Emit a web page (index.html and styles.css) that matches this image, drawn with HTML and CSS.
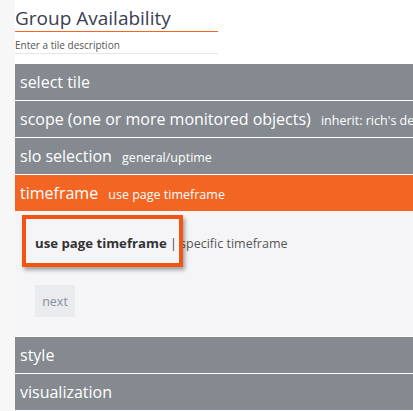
FILE: index.html
```html
<!DOCTYPE html>
<html lang="en">
<head>
    <meta charset="UTF-8">
    <title>Group Availability</title>
    <link rel="stylesheet" href="styles.css">
</head>
<body>
    <div class="editor">
        <div class="tile-head">
            <h2 class="tile-title">Group Availability</h2>
            <div class="tile-desc">Enter a tile description</div>
        </div>

        <div class="step">select tile</div>
        <div class="step">scope (one or more monitored objects) <span class="step-value">inherit: rich's demo group</span></div>
        <div class="step">slo selection <span class="step-value">general/uptime</span></div>
        <div class="step active">timeframe <span class="step-value">use page timeframe</span></div>

        <div class="step-body">
            <div class="choice">
                <span class="option selected">use page timeframe</span>
                <span class="sep">|</span>
                <span class="option">specific timeframe</span>
                <div class="highlight"></div>
            </div>
            <button class="next">next</button>
        </div>

        <div class="step">style</div>
        <div class="step">visualization</div>
    </div>
</body>
</html>
```

FILE: styles.css
```css
body {
    margin: 0;
    background: #f7f7f7;
    font-family: "Open Sans", "Noto Sans", sans-serif;
    overflow: hidden;
}
.editor {
    margin-left: 15px;
    width: 398px;
    background: #fff;
    overflow: hidden;
}
.tile-head {
    padding-top: 6px;
    height: 64px;
    box-sizing: border-box;
}
.tile-title {
    margin: 0;
    width: 203px;
    font-size: 19px;
    font-weight: normal;
    color: #3b4052;
    line-height: 25px;
    border-bottom: 1px solid #f26522;
}
.tile-desc {
    width: 203px;
    margin-top: 5px;
    font-size: 10px;
    color: #555;
    line-height: 16px;
    border-bottom: 1px solid #e6e6e6;
}
.step {
    height: 36px;
    line-height: 36px;
    padding-left: 5px;
    background: #848a90;
    color: #fff;
    font-size: 16px;
    white-space: nowrap;
    border-bottom: 1px solid #fff;
}
.step-value {
    font-size: 12.5px;
    margin-left: 6px;
}
.step.active {
    background: #f26522;
    border-bottom: none;
}
.step-body {
    background: #f5f5f8;
    height: 126px;
    padding: 22px 0 0 20px;
    box-sizing: border-box;
    border-bottom: 1px solid #fff;
}
.choice {
    position: relative;
    font-size: 12.5px;
    color: #555;
    line-height: 20px;
}
.option.selected {
    font-weight: bold;
    font-size: 13.2px;
    color: #333;
}
.sep {
    color: #444;
}
.highlight {
    position: absolute;
    left: -13px;
    top: -18px;
    width: 153px;
    height: 44px;
    border: 4px solid #f25511;
    box-shadow: 2px 3px 4px rgba(0,0,0,0.35);
}
.next {
    display: block;
    margin: 31px 0 0 0;
    border: none;
    background: #e9ebee;
    color: #8a9099;
    font-family: inherit;
    font-size: 12.5px;
    height: 32px;
    width: 40px;
    padding: 0;
}
```
